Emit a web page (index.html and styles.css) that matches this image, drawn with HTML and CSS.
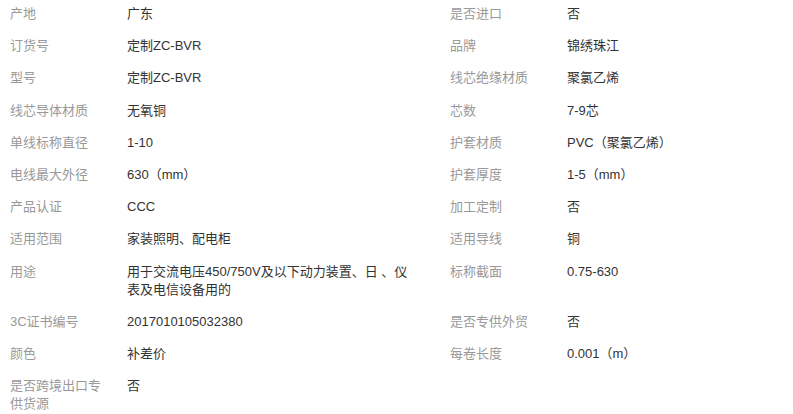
FILE: index.html
```html
<!DOCTYPE html>
<html lang="zh">
<head>
<meta charset="utf-8">
<link rel="stylesheet" href="styles.css">
</head>
<body>
<div class="attrs">
  <div class="k">产地</div><div class="v">广东</div><div class="k">是否进口</div><div class="v">否</div>
  <div class="k">订货号</div><div class="v">定制ZC-BVR</div><div class="k">品牌</div><div class="v">锦绣珠江</div>
  <div class="k">型号</div><div class="v">定制ZC-BVR</div><div class="k">线芯绝缘材质</div><div class="v">聚氯乙烯</div>
  <div class="k">线芯导体材质</div><div class="v">无氧铜</div><div class="k">芯数</div><div class="v">7-9芯</div>
  <div class="k">单线标称直径</div><div class="v">1-10</div><div class="k">护套材质</div><div class="v">PVC（聚氯乙烯）</div>
  <div class="k">电线最大外径</div><div class="v">630（mm）</div><div class="k">护套厚度</div><div class="v">1-5（mm）</div>
  <div class="k">产品认证</div><div class="v">CCC</div><div class="k">加工定制</div><div class="v">否</div>
  <div class="k">适用范围</div><div class="v">家装照明、配电柜</div><div class="k">适用导线</div><div class="v">铜</div>
  <div class="k">用途</div><div class="v">用于交流电压450/750V及以下动力装置、日 、仪表及电信设备用的</div><div class="k">标称截面</div><div class="v">0.75-630</div>
  <div class="k">3C证书编号</div><div class="v">2017010105032380</div><div class="k">是否专供外贸</div><div class="v">否</div>
  <div class="k">颜色</div><div class="v">补差价</div><div class="k">每卷长度</div><div class="v">0.001（m）</div>
  <div class="k">是否跨境出口专供货源</div><div class="v">否</div>
</div>
</body>
</html>
```

FILE: styles.css
```css
html, body {
  margin: 0;
  padding: 0;
  background: #fff;
}
body {
  font-family: "Liberation Sans", Arial, "Noto Sans CJK SC", sans-serif;
  font-size: 13px;
  line-height: 1.4;
}
.attrs {
  display: grid;
  grid-template-columns: 117px 323px 117px 1fr;
  padding-left: 10px;
}
.k, .v {
  padding: 5px 0 9px;
}
.k {
  color: #999;
  padding-right: 15px;
}
.v {
  color: #333;
  padding-right: 34px;
}
```
